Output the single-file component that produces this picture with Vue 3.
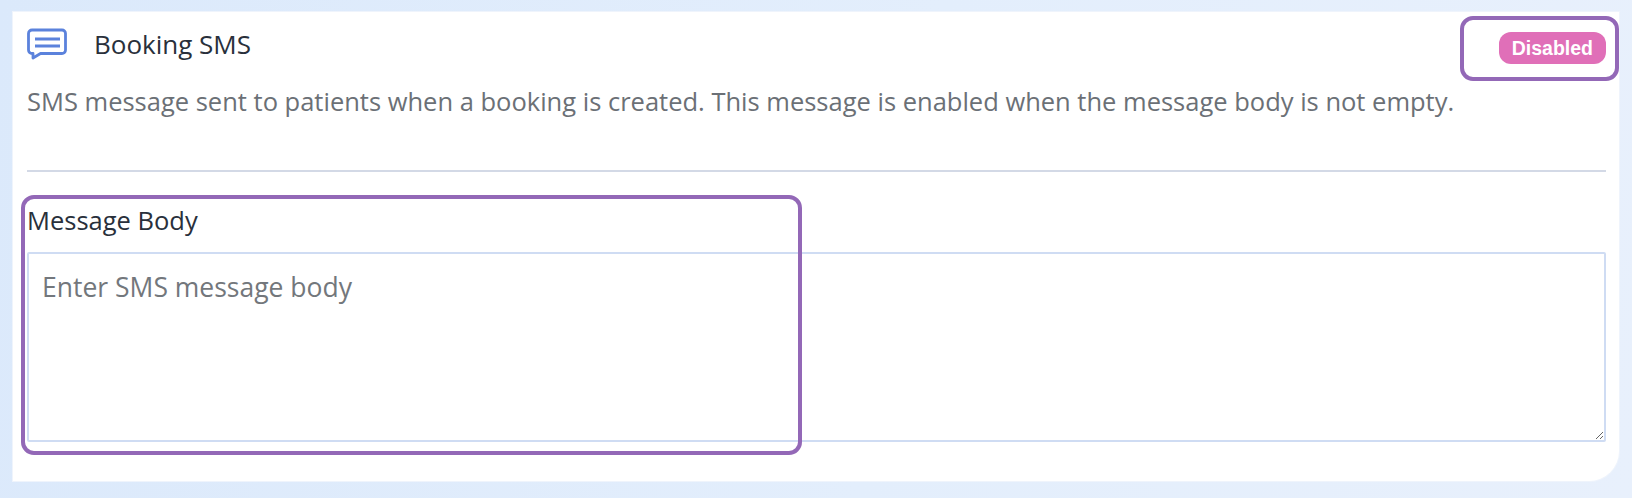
<script setup>
import { ref } from 'vue'

const messageBody = ref('')
</script>

<template>
  <div class="page">
    <div class="card">
      <div class="card-head">
        <svg class="sms-icon" viewBox="0 0 40 32" width="40" height="32" fill="none">
          <path d="M5 2H35A3.500 3.500 0 0 1 38.500 5.500V22A3.500 3.500 0 0 1 35 25.500H13.500L6 30V25.500H5A3.500 3.500 0 0 1 1.500 22V5.500A3.500 3.500 0 0 1 5 2Z" stroke="#5b82dc" stroke-width="2.800" stroke-linejoin="round" />
          <path d="M8 11H33M8 18H33" stroke="#5b82dc" stroke-width="2.800" />
        </svg>
        <h2 class="card-title">Booking SMS</h2>
        <span class="status-badge">Disabled</span>
      </div>
      <p class="card-description">
        SMS message sent to patients when a booking is created. This message is enabled when the message body is not empty.
      </p>
      <hr class="card-divider">
      <label class="field-label" for="sms-body">Message Body</label>
      <textarea id="sms-body" v-model="messageBody" class="field-input" placeholder="Enter SMS message body"></textarea>

      <div class="callout callout-badge"></div>
      <div class="callout callout-field"></div>
    </div>
  </div>
</template>

<style>
html,
body {
  margin: 0;
  background: #e4eefb;
}
</style>

<style scoped>
.page {
  width: 1632px;
  height: 498px;
  box-sizing: border-box;
  padding: 12px 13px 17px;
  background: linear-gradient(100deg, #dbe9fb 0%, #e3eefc 55%, #e8f0fc 100%);
  font-family: 'Open Sans', sans-serif;
  overflow: hidden;
}

.card {
  position: relative;
  box-sizing: border-box;
  height: 469px;
  padding: 14px 13px 0 14px;
  background: #fff;
  border-radius: 0 0 30px 0;
  box-shadow: 0 0 0 1px #eff4fc;
}

.card-head {
  display: flex;
  align-items: center;
  height: 36px;
}

.sms-icon {
  flex: none;
  margin-right: 27px;
  width: 40px;
  height: 32px;
}

.card-title {
  margin: 0;
  font-size: 26px;
  font-weight: 400;
  color: #29303b;
}

.status-badge {
  margin-left: auto;
  margin-top: 8px;
  padding: 0 13px;
  height: 32px;
  line-height: 32px;
  border-radius: 12px;
  background: #e06fb8;
  color: #fff;
  font-family: 'Liberation Sans', sans-serif;
  font-size: 19.500px;
  font-weight: 700;
}

.card-description {
  margin: 21px 0 0;
  font-size: 25.500px;
  line-height: 36px;
  color: #6b7076;
}

.card-divider {
  margin: 51px 0 0;
  border: none;
  border-top: 2px solid #d3d9e6;
}

.field-label {
  display: block;
  margin-top: 30px;
  font-size: 25.500px;
  line-height: 36px;
  color: #29303b;
}

.field-input {
  display: block;
  box-sizing: border-box;
  width: 100%;
  height: 190px;
  margin-top: 14px;
  padding: 15px 13px;
  border: 2px solid #cfdcf3;
  border-radius: 2px;
  outline: none;
  background: #fff;
  font-family: 'Open Sans', sans-serif;
  font-size: 26.500px;
  line-height: 36px;
}

.field-input::placeholder {
  color: #73777c;
  opacity: 1;
}

.callout {
  position: absolute;
  box-sizing: border-box;
  border: 4px solid #9368b7;
  border-radius: 13px;
  pointer-events: none;
}

.callout-badge {
  left: 1447px;
  top: 4px;
  width: 159px;
  height: 65px;
}

.callout-field {
  left: 8px;
  top: 183px;
  width: 781px;
  height: 260px;
}
</style>
